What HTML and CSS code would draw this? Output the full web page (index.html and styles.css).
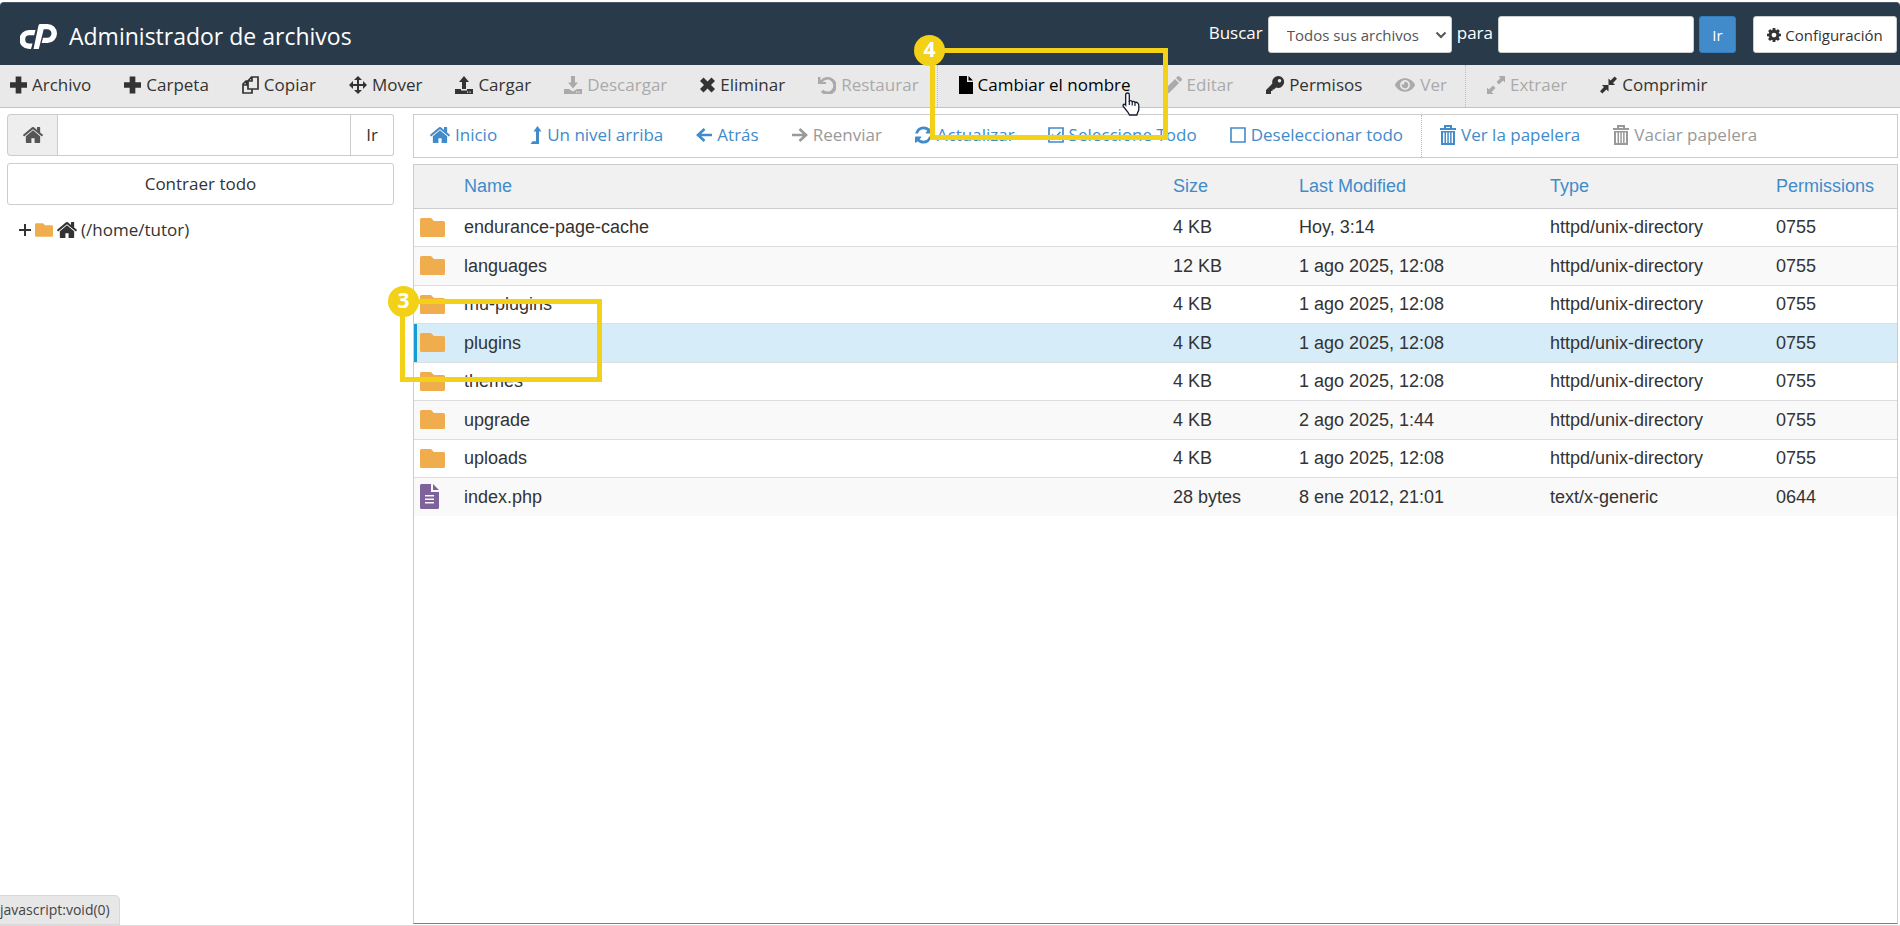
FILE: index.html
```html
<!DOCTYPE html>
<html lang="es">
<head>
<meta charset="utf-8">
<title>Administrador de archivos</title>
<link rel="stylesheet" href="styles.css">
</head>
<body>
<svg class="sprite" aria-hidden="true">
  <symbol id="i-plus" viewBox="0 0 18 18"><path d="M6 0h6v6h6v6h-6v6H6v-6H0V6h6z"/></symbol>
  <symbol id="i-treeplus" viewBox="0 0 12 12"><path d="M5 0h2v5h5v2H7v5H5V7H0V5h5z"/></symbol>
  <symbol id="i-copy" viewBox="0 0 17 18"><path d="M6 5L9.500 1H16v12H6zM6 5h4V1M6 5H4L1 8v9h9v-4M1 9h3.500V5" fill="none" stroke="currentColor" stroke-width="1.700"/></symbol>
  <symbol id="i-move" viewBox="0 0 18 18"><path d="M9 0l4 4h-3v4h4V5l4 4-4 4v-3h-4v4h3l-4 4-4-4h3v-4H4v3L0 9l4-4v3h4V4H5z"/></symbol>
  <symbol id="i-upload" viewBox="0 0 18 18"><path d="M9 0l5 6h-3v7H7V6H4z"/><path d="M0 13h6v1.500h6V13h6v5H0zm12 2.500v1.200h1.200v-1.200zm2.500 0v1.200h1.200v-1.200z" fill-rule="evenodd"/></symbol>
  <symbol id="i-download" viewBox="0 0 18 18"><path d="M9 12.500l5-6h-3V0H7v6.500H4z"/><path d="M0 13h5l4 2.500 4-2.500h5v5H0zm12 2.500v1.200h1.200v-1.200zm2.500 0v1.200h1.200v-1.200z" fill-rule="evenodd"/></symbol>
  <symbol id="i-times" viewBox="0 0 15 15"><path d="M3.500 0l4 4 4-4L15 3.500l-4 4 4 4-3.500 3.500-4-4-4 4L0 11.500l4-4-4-4z"/></symbol>
  <symbol id="i-undo" viewBox="0 0 18 18"><path d="M0 1h2.500v3.500A9 9 0 1 1 3 16l2-2.200A6 6 0 1 0 4.500 6H8v2H0z"/></symbol>
  <symbol id="i-file" viewBox="0 0 14 18"><path d="M0 0h8v6h6v12H0zM9.500 0L14 4.500H9.500z"/></symbol>
  <symbol id="i-pencil" viewBox="0 0 18 18"><path d="M11 3l4 4L5 17l-5 1 1-5zM12 2l1.500-1.500q1-1 2 0l2 2q1 1 0 2L16 6zM2.500 13.500l-.5 2.500 2.500-.5z" fill-rule="evenodd"/></symbol>
  <symbol id="i-key" viewBox="0 0 18 18"><path d="M12 0a6 6 0 1 1-2 11.600L8 13.500H6.500V15H5v3H0v-4l6.400-6.400A6 6 0 0 1 12 0zm1.500 3a1.700 1.700 0 1 0 .01 0z" fill-rule="evenodd"/></symbol>
  <symbol id="i-eye" viewBox="0 0 576 512"><path d="M572.520 241.400C518.290 135.590 410.930 64 288 64S57.680 135.640 3.480 241.410a32.350 32.350 0 0 0 0 29.190C57.710 376.410 165.070 448 288 448s230.320-71.640 284.520-177.410a32.350 32.350 0 0 0 0-29.190zM288 400a144 144 0 1 1 144-144 143.930 143.930 0 0 1-144 144zm0-240a95.310 95.310 0 0 0-25.310 3.790 47.850 47.850 0 0 1-66.900 66.900A95.780 95.780 0 1 0 288 160z"/></symbol>
  <symbol id="i-expand" viewBox="0 0 18 18"><path d="M11.500 0H18v6.500l-2-2L12 8.500 9.500 6l4-4zM6.500 18H0v-6.500l2 2L6 9.500 8.500 12l-4 4z"/></symbol>
  <symbol id="i-compress" viewBox="0 0 18 18"><path d="M9 9V2l2.200 2.200L15.500 0 18 2.500l-4.200 4.300L16 9zM9 9v7l-2.200-2.200L2.500 18 0 15.500l4.200-4.300L2 9z"/></symbol>
  <symbol id="i-home" viewBox="90 250 1612 1290"><path d="M1472 992v480q0 26-19 45t-45 19h-384v-384h-256v384h-384q-26 0-45-19t-19-45v-480q0-1 .5-3t.5-3l575-474 575 474q1 2 1 6zm223-69l-62 74q-8 9-21 11h-3q-13 0-21-7l-692-577-692 577q-12 8-24 7-13-2-21-11l-62-74q-8-10-7-23.500t11-21.500l719-599q32-26 76-26t76 26l244 204v-195q0-14 9-23t23-9h192q14 0 23 9t9 23v408l219 182q10 8 11 21.500t-7 23.500z"/></symbol>
  <symbol id="i-levelup" viewBox="0 0 11 18"><path d="M7 0l4 5.500H8.500V18H0l2-2.800h3.500V5.500H3z"/></symbol>
  <symbol id="i-left" viewBox="0 0 16 14"><path d="M8.500 1L2 7l6.500 6M2 7h14" fill="none" stroke="currentColor" stroke-width="2.600"/></symbol>
  <symbol id="i-right" viewBox="0 0 16 14"><path d="M7.500 1L14 7l-6.500 6M14 7H0" fill="none" stroke="currentColor" stroke-width="2.600"/></symbol>
  <symbol id="i-refresh" viewBox="128 128 1536 1536"><path d="M1639 1056q0 5-1 7-64 268-268 434.500t-478 166.500q-146 0-282.500-55t-243.500-157l-129 129q-19 19-45 19t-45-19-19-45v-448q0-26 19-45t45-19h448q26 0 45 19t19 45-19 45l-137 137q71 66 161 102t187 36q134 0 250-65t186-179q11-17 53-117 8-23 30-23h192q13 0 22.500 9.500t9.500 22.500zm25-800v448q0 26-19 45t-45 19h-448q-26 0-45-19t-19-45 19-45l138-138q-148-137-349-137-134 0-250 65t-186 179q-11 17-53 117-8 23-30 23h-199q-13 0-22.500-9.500t-9.500-22.500v-7q65-268 270-434.500t480-166.500q146 0 284 55.500t245 156.500l130-129q19-19 45-19t45 19 19 45z"/></symbol>
  <symbol id="i-checked" viewBox="0 0 16 16"><path d="M1 1h14v14H1zM4 7.500l3 3L12.500 5" fill="none" stroke="currentColor" stroke-width="1.700"/></symbol>
  <symbol id="i-square" viewBox="0 0 16 16"><path d="M1 1h14v14H1z" fill="none" stroke="currentColor" stroke-width="1.600"/></symbol>
  <symbol id="i-trash" viewBox="0 0 16 20"><path d="M5 3V1h6v2M0 4h16" fill="none" stroke="currentColor" stroke-width="2"/><path d="M1 6h14v14H1zm2 1.500V18h1.500V7.500zm3 0V18h1.300V7.500zm2.800 0V18h1.300V7.500zm2.800 0V18H13V7.500z" fill-rule="evenodd"/></symbol>
  <symbol id="i-cog" viewBox="128 128 1536 1536"><path d="M1152 896q0-106-75-181t-181-75-181 75-75 181 75 181 181 75 181-75 75-181zm512-109v222q0 12-8 23t-20 13l-185 28q-19 54-39 91 35 50 107 138 10 12 10 25t-9 23q-27 37-99 108t-94 71q-12 0-26-9l-138-108q-44 23-91 38-16 136-29 186-7 28-36 28h-222q-14 0-24.500-8.500t-11.500-21.500l-28-184q-49-16-90-37l-141 107q-10 9-25 9-14 0-25-11-126-114-165-168-7-10-7-23 0-12 8-23 15-21 51-66.500t54-70.500q-27-50-41-99l-183-27q-13-2-21-12.500t-8-23.500v-222q0-12 8-23t19-13l186-28q14-46 39-92-40-57-107-138-10-12-10-24 0-10 9-23 26-36 98.500-107.500t94.500-71.500q13 0 26 10l138 107q44-23 91-38 16-136 29-186 7-28 36-28h222q14 0 24.500 8.500t11.500 21.500l28 184q49 16 90 37l142-107q9-9 24-9 13 0 25 10 129 119 165 170 7 8 7 22 0 12-8 23-15 21-51 66.500t-54 70.500q26 50 41 98l183 28q13 2 21 12.500t8 23.500z"/></symbol>
  <symbol id="i-folder" viewBox="0 0 25 19"><path d="M1.500 0H11l3 3h9.500q1.500 0 1.500 1.500v13q0 1.500-1.500 1.500h-22Q0 19 0 17.500v-16Q0 0 1.500 0z"/></symbol>
  <symbol id="i-doc" viewBox="0 0 19 25"><path d="M1.500 0H11v8h8v15.500q0 1.500-1.500 1.500h-16Q0 25 0 23.500v-22Q0 0 1.500 0zM13 0l6 6h-6zM5 11v1.500h9V11zm0 3.500V16h9v-1.500zM5 18v1.500h9V18z" fill-rule="evenodd"/></symbol>
  <symbol id="i-chevron" viewBox="0 0 12 8"><path d="M1.500 1.500L6 6l4.500-4.500" fill="none" stroke="currentColor" stroke-width="2"/></symbol>
</svg>

<header class="topbar">
  <h1 class="brand">
    <svg class="logo" viewBox="0 0 37 25" aria-label="cPanel"><path d="M15.500 6H9A9.500 9.500 0 0 0 9 25h2l1.500-5.500H9.300a4.100 4.100 0 0 1 0-8.200h4.900zM20 0h7.500a9.500 9.500 0 0 1 0 19h-5.800l1.300-5.300h4.300a4.200 4.200 0 0 0 0-8.400h-3.600L18.800 25h-5.300L18.300 2.200Q18.700 0 20 0z"/></svg>
    Administrador de archivos
  </h1>
  <form class="search">
    <label for="scope">Buscar</label>
    <span class="select-wrap"><select id="scope"><option>Todos sus archivos</option></select><svg class="chevron"><use href="#i-chevron"/></svg></span>
    <label for="query">para</label>
    <input id="query" type="text">
    <button class="go" type="button">Ir</button>
    <button class="settings" type="button"><svg class="w14"><use href="#i-cog"/></svg>Configuración</button>
  </form>
</header>

<nav class="toolbar">
  <div class="group">
    <button type="button"><svg class="w17"><use href="#i-plus"/></svg>Archivo</button>
    <button type="button"><svg class="w17"><use href="#i-plus"/></svg>Carpeta</button>
    <button type="button"><svg class="w17"><use href="#i-copy"/></svg>Copiar</button>
    <button type="button"><svg class="w18"><use href="#i-move"/></svg>Mover</button>
    <button type="button"><svg class="w18"><use href="#i-upload"/></svg>Cargar</button>
    <button type="button" disabled><svg class="w18"><use href="#i-download"/></svg>Descargar</button>
    <button type="button"><svg class="w15"><use href="#i-times"/></svg>Eliminar</button>
    <button type="button" disabled><svg class="w18"><use href="#i-undo"/></svg>Restaurar</button>
  </div>
  <div class="group">
    <button type="button" class="hover"><svg class="w14"><use href="#i-file"/></svg>Cambiar el nombre</button>
    <button type="button" disabled><svg class="w18"><use href="#i-pencil"/></svg>Editar</button>
    <button type="button"><svg class="w18"><use href="#i-key"/></svg>Permisos</button>
    <button type="button" disabled><svg class="w20"><use href="#i-eye"/></svg>Ver</button>
  </div>
  <div class="group">
    <button type="button" disabled><svg class="w18"><use href="#i-expand"/></svg>Extraer</button>
    <button type="button"><svg class="w17"><use href="#i-compress"/></svg>Comprimir</button>
  </div>
</nav>

<main class="workspace">
  <aside class="sidebar">
    <form class="path">
      <label for="dir" aria-label="Directorio"><svg class="w20"><use href="#i-home"/></svg></label>
      <input id="dir" type="text">
      <button type="button">Ir</button>
    </form>
    <button class="collapse" type="button">Contraer todo</button>
    <div class="tree">
      <svg class="w12"><use href="#i-treeplus"/></svg>
      <svg class="w18 amber"><use href="#i-folder"/></svg>
      <svg class="w20"><use href="#i-home"/></svg>
      <span>(/home/tutor)</span>
    </div>
  </aside>

  <section class="content">
    <nav class="actions">
      <div class="group">
        <button type="button"><svg class="w20"><use href="#i-home"/></svg>Inicio</button>
        <button type="button"><svg class="w12"><use href="#i-levelup"/></svg>Un nivel arriba</button>
        <button type="button"><svg class="w16"><use href="#i-left"/></svg>Atrás</button>
        <button type="button" disabled><svg class="w16"><use href="#i-right"/></svg>Reenviar</button>
        <button type="button"><svg class="w17"><use href="#i-refresh"/></svg>Actualizar</button>
        <button type="button"><svg class="w16"><use href="#i-checked"/></svg>Seleccione Todo</button>
        <button type="button"><svg class="w16"><use href="#i-square"/></svg>Deseleccionar todo</button>
      </div>
      <div class="group">
        <button type="button"><svg class="w16"><use href="#i-trash"/></svg>Ver la papelera</button>
        <button type="button" disabled><svg class="w16"><use href="#i-trash"/></svg>Vaciar papelera</button>
      </div>
    </nav>
    <div class="listing">
      <table>
        <colgroup><col class="c-icon"><col><col class="c-size"><col class="c-date"><col class="c-type"><col class="c-perm"></colgroup>
        <thead><tr><th></th><th>Name</th><th>Size</th><th>Last Modified</th><th>Type</th><th>Permissions</th></tr></thead>
        <tbody>
          <tr><td><svg class="folder"><use href="#i-folder"/></svg></td><td>endurance-page-cache</td><td>4 KB</td><td>Hoy, 3:14</td><td>httpd/unix-directory</td><td>0755</td></tr>
          <tr><td><svg class="folder"><use href="#i-folder"/></svg></td><td>languages</td><td>12 KB</td><td>1 ago 2025, 12:08</td><td>httpd/unix-directory</td><td>0755</td></tr>
          <tr><td><svg class="folder"><use href="#i-folder"/></svg></td><td>mu-plugins</td><td>4 KB</td><td>1 ago 2025, 12:08</td><td>httpd/unix-directory</td><td>0755</td></tr>
          <tr class="selected"><td><svg class="folder"><use href="#i-folder"/></svg></td><td>plugins</td><td>4 KB</td><td>1 ago 2025, 12:08</td><td>httpd/unix-directory</td><td>0755</td></tr>
          <tr><td><svg class="folder"><use href="#i-folder"/></svg></td><td>themes</td><td>4 KB</td><td>1 ago 2025, 12:08</td><td>httpd/unix-directory</td><td>0755</td></tr>
          <tr><td><svg class="folder"><use href="#i-folder"/></svg></td><td>upgrade</td><td>4 KB</td><td>2 ago 2025, 1:44</td><td>httpd/unix-directory</td><td>0755</td></tr>
          <tr><td><svg class="folder"><use href="#i-folder"/></svg></td><td>uploads</td><td>4 KB</td><td>1 ago 2025, 12:08</td><td>httpd/unix-directory</td><td>0755</td></tr>
          <tr><td><svg class="doc"><use href="#i-doc"/></svg></td><td>index.php</td><td>28 bytes</td><td>8 ene 2012, 21:01</td><td>text/x-generic</td><td>0644</td></tr>
        </tbody>
      </table>
    </div>
  </section>
</main>

<div class="status">javascript:void(0)</div>

<div class="callout callout-3"><span class="badge">3</span></div>
<div class="callout callout-4"><span class="badge">4</span></div>
<svg class="pointer" viewBox="0 0 18 24"><path d="M5.500 1q1.800 0 1.800 1.800V9q1.500-.8 2.900.6 1.600-.7 2.700.8 1.800-.6 3 .8 1 .8.900 3v3q0 1.500-1 3l-1 2.800H7.500Q6 20 4.500 18.500L1.300 14.500Q.6 13 1.700 12.400q1-.5 2 .8V2.800Q3.700 1 5.500 1z" fill="#fff" stroke="#111a30" stroke-width="1.300"/><path d="M7.300 9v4M10.200 10v3.500M13 11v3" fill="none" stroke="#111a30" stroke-width="1.200"/></svg>
</body>
</html>
```

FILE: styles.css
```css
* { box-sizing: border-box; }

body {
  margin: 0;
  min-height: 100vh;
  display: flex;
  flex-direction: column;
  position: relative;
  padding-top: 2px;
  background: #fff;
  border-bottom: 1px solid #ddd;
  color: #333;
  font: 17px/24px "Open Sans", sans-serif;
}

button, input, select { font: inherit; color: inherit; margin: 0; }
button { background: none; border: 0; padding: 0; }
svg { fill: currentColor; flex: none; }

.sprite { position: absolute; width: 0; height: 0; }
.w12 { width: 12px; height: 18px; }
.w14 { width: 14px; height: 18px; }
.w15 { width: 15px; height: 18px; }
.w16 { width: 16px; height: 20px; }
.w17 { width: 17px; height: 18px; }
.w18 { width: 18px; height: 18px; }
.w20 { width: 20px; height: 18px; }
.amber { color: #f0ad4e; }

/* Header */
.topbar {
  display: flex;
  justify-content: space-between;
  height: 63px;
  padding: 0 3px 0 20px;
  background: #293a4a;
  border-top: 1px solid #4a5866;
  border-radius: 4px 4px 0 0;
  color: #fff;
}
.brand {
  display: flex;
  align-items: center;
  gap: 12px;
  margin: 0;
  padding-top: 4px;
  font-size: 23px;
  font-weight: 400;
}
.logo { width: 37px; height: 25px; }
.search { display: flex; align-items: flex-start; padding-top: 13px; gap: 5px; }
.search label { line-height: 34px; }
.search input, .search select, .search button { height: 37px; border-radius: 3px; font-size: 15px; }
.search input, .search select { background: #fff; border: 1px solid #ccc; }
.search input { width: 196px; padding: 0 14px; color: #555; }
.select-wrap { position: relative; display: flex; color: #555; }
.search select { appearance: none; width: 184px; padding: 0 18px; }
.chevron { position: absolute; right: 5px; top: 15px; width: 12px; height: 8px; }
.search .go { width: 37px; background: #428bca; border: 1px solid #357ebd; }
.search .settings {
  display: flex;
  align-items: center;
  justify-content: center;
  gap: 4px;
  width: 144px;
  margin-left: 12px;
  background: #fff;
  border: 1px solid #ccc;
  color: #333;
}

/* Toolbars */
.toolbar, .actions, .group, .group button { display: flex; align-items: center; }
.toolbar {
  height: 43px;
  padding-left: 10px;
  background: #e9e9e9;
  border-bottom: 1px solid #c4c4c4;
}
.group { height: 100%; gap: 33px; padding: 0 18px 2px 0; }
.group button { gap: 5px; white-space: nowrap; }
.group + .group { padding-left: 21px; border-left: 1px dotted #bbb; }
.toolbar button:disabled { color: #aaa; }
.toolbar .hover { color: #000; }

/* Body */
.workspace { flex: 1; display: flex; gap: 19px; padding: 6px 2px 0 7px; }
.sidebar { width: 387px; }
.path { display: flex; height: 42px; }
.path label, .path input, .path button { border: 1px solid #ccc; }
.path label {
  display: flex;
  align-items: center;
  justify-content: center;
  width: 50px;
  background: #eee;
  border-right: 0;
  border-radius: 4px 0 0 4px;
  color: #555;
}
.path input { flex: 1; min-width: 0; padding: 0 12px; }
.path button { width: 43px; border-left: 0; border-radius: 0 3px 3px 0; }
.collapse { width: 100%; height: 42px; margin-top: 7px; border: 1px solid #ccc; border-radius: 3px; }
.tree { display: flex; align-items: center; gap: 4px; padding: 13px 12px; }
.tree .w12 { height: 12px; }

.content { flex: 1; display: flex; flex-direction: column; gap: 6px; }
.actions { height: 44px; padding-left: 16px; border: 1px solid #ccc; color: #428bca; }
.actions .group + .group { padding-left: 18px; }
.actions button:disabled { color: #999; }

.listing { flex: 1; border: 1px solid #ccc; border-bottom: 1px solid #808080; margin-bottom: 1px; }
table {
  width: 100%;
  table-layout: fixed;
  border-collapse: collapse;
  font: 18px/24px "Liberation Sans", Arial, sans-serif;
}
.c-icon { width: 44px; }
.c-size { width: 126px; }
.c-date { width: 251px; }
.c-type { width: 226px; }
.c-perm { width: 127px; }
th { height: 43px; padding: 0 6px; background: #f1f1f1; border-bottom: 1px solid #ccc; color: #428bca; font-weight: 400; text-align: left; }
td { height: 38px; padding: 0 6px; border-bottom: 1px solid #ddd; white-space: nowrap; }
tbody tr:nth-child(even) td { height: 39px; background: #f9f9f9; }
tbody tr:last-child td { border-bottom: 0; }
tbody tr.selected td { background: #d7ecf9; }
tbody tr.selected td:first-child { box-shadow: inset 3px 0 #179bd7; }
td svg { display: block; }
.folder { width: 25px; height: 19px; color: #f0ad4e; }
.doc { width: 19px; height: 25px; color: #7e629b; }

/* Overlays */
.status {
  position: absolute;
  left: 0;
  bottom: 0;
  width: 120px;
  padding: 2px 0;
  background: #e7e7e7;
  border: 1px solid #d8d8d8;
  border-left: 0;
  border-radius: 0 5px 0 0;
  font-size: 14px;
  color: #444;
}
.callout { position: absolute; border: 5px solid #f3d117; }
.callout-3 { left: 400px; top: 299px; width: 202px; height: 83px; }
.callout-4 { left: 930px; top: 48px; width: 238px; height: 92px; }
.badge {
  position: absolute;
  left: -17px;
  top: -18px;
  width: 31px;
  height: 31px;
  border-radius: 50%;
  background: #f3d117;
  color: #fff;
  font-size: 21px;
  font-weight: 700;
  line-height: 29px;
  text-align: center;
}
.callout-4 .badge { left: -21px; }
.pointer { position: absolute; left: 1122px; top: 92px; width: 18px; height: 24px; }
```
